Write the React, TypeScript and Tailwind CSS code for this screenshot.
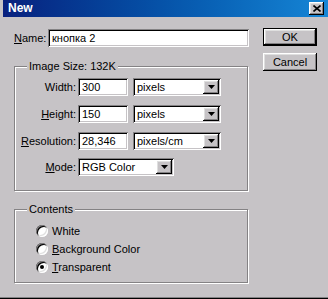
import React from "react";

const sunken =
  "bg-white shadow-[inset_1px_1px_0_#848284,inset_-1px_-1px_0_#ffffff,inset_2px_2px_0_#000000,inset_-2px_-2px_0_#c6c3c6]";
const raised =
  "bg-[#c6c3c6] shadow-[inset_-1px_-1px_0_#000000,inset_1px_1px_0_#ffffff,inset_-2px_-2px_0_#848284,inset_2px_2px_0_#dfdfdf]";
const etched =
  "relative border border-[#848284] shadow-[inset_1px_1px_0_#ffffff,1px_1px_0_#ffffff]";

function Arrow() {
  return (
    <div className={`w-[16px] h-[14px] flex items-center justify-center ${raised}`}>
      <svg width="7" height="4" viewBox="0 0 7 4">
        <path d="M0 0h7L3.5 4z" fill="#000" />
      </svg>
    </div>
  );
}

function Select({ value, w }: { value: string; w: string }) {
  return (
    <div className={`${w} h-[18px] flex items-center justify-between pl-[4px] pr-[2px] ${sunken}`}>
      <span>{value}</span>
      <Arrow />
    </div>
  );
}

function Field({ value, w }: { value: string; w: string }) {
  return (
    <div className={`${w} h-[18px] flex items-center pl-[4px] ${sunken}`}>
      <span>{value}</span>
    </div>
  );
}

function SizeRow({ label, value, unit }: { label: React.ReactNode; value: string; unit: string }) {
  return (
    <div className="flex items-center h-[18px]">
      <div className="w-[61px] text-right">{label}</div>
      <div className="ml-[2px]">
        <Field value={value} w="w-[50px]" />
      </div>
      <div className="ml-[5px]">
        <Select value={unit} w="w-[88px]" />
      </div>
    </div>
  );
}

function Radio({ label, checked }: { label: React.ReactNode; checked?: boolean }) {
  return (
    <div className="flex items-center h-[18px]">
      <div className="w-[12px] h-[12px] rounded-full bg-white shadow-[inset_1px_1px_0_#848284,inset_-1px_-1px_0_#ffffff,inset_2px_2px_0_#000000,inset_-2px_-2px_0_#dfdfdf] flex items-center justify-center">
        {checked && <div className="w-[4px] h-[4px] rounded-full bg-black" />}
      </div>
      <span className="ml-[4px]">{label}</span>
    </div>
  );
}

const U = ({ children }: { children: React.ReactNode }) => (
  <span className="underline underline-offset-[1px]">{children}</span>
);

export default function App() {
  return (
    <div className="w-[328px] h-[299px] bg-[#c6c3c6] flex flex-col font-['Liberation_Sans',Arial,sans-serif] text-[11px] leading-[13px] text-black overflow-hidden">
      {/* Title bar */}
      <div className="ml-[3px] h-[17px] flex items-center justify-between bg-gradient-to-r from-[#08207e] to-[#1686d6]">
        <span className="pl-[5px] text-white font-bold text-[12px]">New</span>
        <div className={`mr-[4px] w-[15px] h-[13px] flex items-center justify-center ${raised}`}>
          <svg width="8" height="7" viewBox="0 0 8 7">
            <path d="M0.5 0.5L7.5 6.5M7.5 0.5L0.5 6.5" stroke="#000" strokeWidth="1.6" />
          </svg>
        </div>
      </div>

      {/* Body */}
      <div className="flex flex-1 pl-[14px]">
        <div className="w-[235px] flex flex-col">
          <div className="mt-[12px] flex items-center h-[18px]">
            <div className="w-[34px]">
              <U>N</U>ame:
            </div>
            <Field value="кнопка 2" w="w-[201px]" />
          </div>

          {/* Image Size */}
          <div className={`mt-[19px] w-[234px] h-[125px] ${etched}`}>
            <div className="absolute left-[12px] top-[-7px] px-[2px] bg-[#c6c3c6]">Image Size: 132K</div>
            <div className="pt-[11px] flex flex-col gap-[9px]">
              <SizeRow label="Width:" value="300" unit="pixels" />
              <SizeRow label={<><U>H</U>eight:</>} value="150" unit="pixels" />
              <SizeRow label={<><U>R</U>esolution:</>} value="28,346" unit="pixels/cm" />
              <div className="flex items-center h-[18px] -mt-[1px]">
                <div className="w-[61px] text-right">
                  <U>M</U>ode:
                </div>
                <div className="ml-[2px]">
                  <Select value="RGB Color" w="w-[96px]" />
                </div>
              </div>
            </div>
          </div>

          {/* Contents */}
          <div className={`mt-[18px] w-[234px] h-[74px] ${etched}`}>
            <div className="absolute left-[12px] top-[-7px] px-[2px] bg-[#c6c3c6]">Contents</div>
            <div className="pt-[12px] pl-[21px] flex flex-col">
              <Radio label="White" />
              <Radio label={<><U>B</U>ackground Color</>} />
              <Radio label={<><U>T</U>ransparent</>} checked />
            </div>
          </div>
        </div>

        {/* Buttons */}
        <div className="ml-[14px] flex flex-col">
          <div className="mt-[11px] w-[54px] h-[18px] border border-black">
            <div className={`w-full h-full flex items-center justify-center ${raised}`}>OK</div>
          </div>
          <div className={`mt-[7px] w-[54px] h-[18px] flex items-center justify-center ${raised}`}>Cancel</div>
        </div>
      </div>

      <div className="h-[1px] bg-[#848284]" />
      <div className="h-[1px] bg-black" />
    </div>
  );
}
